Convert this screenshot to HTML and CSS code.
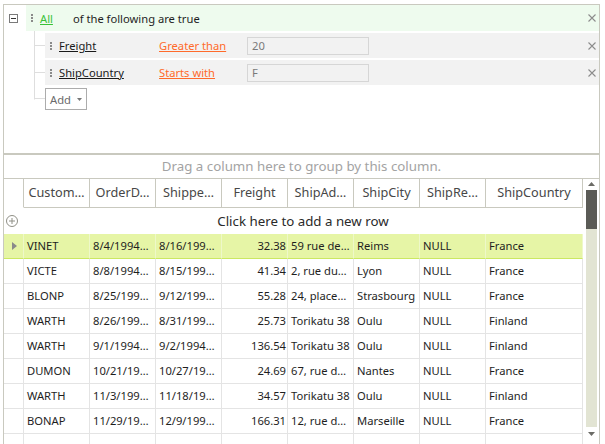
FILE: index.html
```html
<!DOCTYPE html>
<html>
<head>
<meta charset="utf-8">
<link rel="stylesheet" href="styles.css">
</head>
<body>
<div class="app">
  <section class="filter">
    <div class="group-head">
      <span class="toggle"><span class="minus"></span></span>
      <div class="group-bar">
        <svg class="grip" width="2" height="8" viewBox="0 0 2 8"><rect y="0" width="2" height="2"/><rect y="3" width="2" height="2"/><rect y="6" width="2" height="2"/></svg>
        <a class="op-all">All</a>
        <span class="group-text">of the following are true</span>
        <svg class="close" width="8" height="8" viewBox="0 0 8 8"><path d="M0.5 0.5L7.5 7.5M7.5 0.5L0.5 7.5"/></svg>
      </div>
    </div>
    <div class="children">
      <div class="tree-item">
        <span class="link"></span>
        <div class="cond">
          <svg class="grip" width="2" height="8" viewBox="0 0 2 8"><rect y="0" width="2" height="2"/><rect y="3" width="2" height="2"/><rect y="6" width="2" height="2"/></svg>
          <a class="field">Freight</a>
          <a class="oper">Greater than</a>
          <span class="value">20</span>
          <svg class="close" width="8" height="8" viewBox="0 0 8 8"><path d="M0.5 0.5L7.5 7.5M7.5 0.5L0.5 7.5"/></svg>
        </div>
      </div>
      <div class="tree-item">
        <span class="link"></span>
        <div class="cond">
          <svg class="grip" width="2" height="8" viewBox="0 0 2 8"><rect y="0" width="2" height="2"/><rect y="3" width="2" height="2"/><rect y="6" width="2" height="2"/></svg>
          <a class="field">ShipCountry</a>
          <a class="oper">Starts with</a>
          <span class="value">F</span>
          <svg class="close" width="8" height="8" viewBox="0 0 8 8"><path d="M0.5 0.5L7.5 7.5M7.5 0.5L0.5 7.5"/></svg>
        </div>
      </div>
      <div class="tree-item last">
        <span class="link"></span>
        <div class="add-wrap">
          <button class="add">Add <svg width="5" height="3" viewBox="0 0 5 3"><path d="M0 0H5L2.5 3Z"/></svg></button>
        </div>
      </div>
    </div>
  </section>
  <div class="splitter"></div>
  <section class="grid">
    <div class="group-panel">Drag a column here to group by this column.</div>
    <div class="grid-body">
      <div class="grid-main">
        <div class="hrow">
          <div class="hcell ind"></div>
          <div class="hcell">Custom…</div>
          <div class="hcell">OrderD…</div>
          <div class="hcell">Shippe…</div>
          <div class="hcell">Freight</div>
          <div class="hcell">ShipAd…</div>
          <div class="hcell">ShipCity</div>
          <div class="hcell">ShipRe…</div>
          <div class="hcell">ShipCountry</div>
        </div>
        <div class="new-row">
          <svg class="plus" width="12" height="12" viewBox="0 0 12 12"><circle cx="6" cy="6" r="5.5"/><path d="M6 3V9M3 6H9"/></svg>
          <span>Click here to add a new row</span>
        </div>
        <div class="drow selected">
          <div class="cell ind"><svg width="5" height="8" viewBox="0 0 5 8"><path d="M0 0L5 4L0 8Z"/></svg></div>
          <div class="cell">VINET</div><div class="cell">8/4/1994…</div><div class="cell">8/16/199…</div><div class="cell num">32.38</div><div class="cell">59 rue de…</div><div class="cell">Reims</div><div class="cell">NULL</div><div class="cell">France</div>
        </div>
        <div class="drow">
          <div class="cell ind"></div>
          <div class="cell">VICTE</div><div class="cell">8/8/1994…</div><div class="cell">8/15/199…</div><div class="cell num">41.34</div><div class="cell">2, rue du…</div><div class="cell">Lyon</div><div class="cell">NULL</div><div class="cell">France</div>
        </div>
        <div class="drow">
          <div class="cell ind"></div>
          <div class="cell">BLONP</div><div class="cell">8/25/199…</div><div class="cell">9/12/199…</div><div class="cell num">55.28</div><div class="cell">24, place…</div><div class="cell">Strasbourg</div><div class="cell">NULL</div><div class="cell">France</div>
        </div>
        <div class="drow">
          <div class="cell ind"></div>
          <div class="cell">WARTH</div><div class="cell">8/26/199…</div><div class="cell">8/31/199…</div><div class="cell num">25.73</div><div class="cell">Torikatu 38</div><div class="cell">Oulu</div><div class="cell">NULL</div><div class="cell">Finland</div>
        </div>
        <div class="drow">
          <div class="cell ind"></div>
          <div class="cell">WARTH</div><div class="cell">9/1/1994…</div><div class="cell">9/2/1994…</div><div class="cell num">136.54</div><div class="cell">Torikatu 38</div><div class="cell">Oulu</div><div class="cell">NULL</div><div class="cell">Finland</div>
        </div>
        <div class="drow">
          <div class="cell ind"></div>
          <div class="cell">DUMON</div><div class="cell">10/21/19…</div><div class="cell">10/27/19…</div><div class="cell num">24.69</div><div class="cell">67, rue d…</div><div class="cell">Nantes</div><div class="cell">NULL</div><div class="cell">France</div>
        </div>
        <div class="drow">
          <div class="cell ind"></div>
          <div class="cell">WARTH</div><div class="cell">11/3/199…</div><div class="cell">11/18/19…</div><div class="cell num">34.57</div><div class="cell">Torikatu 38</div><div class="cell">Oulu</div><div class="cell">NULL</div><div class="cell">Finland</div>
        </div>
        <div class="drow">
          <div class="cell ind"></div>
          <div class="cell">BONAP</div><div class="cell">11/29/19…</div><div class="cell">12/9/199…</div><div class="cell num">166.31</div><div class="cell">12, rue d…</div><div class="cell">Marseille</div><div class="cell">NULL</div><div class="cell">France</div>
        </div>
        <div class="drow">
          <div class="cell ind"></div>
          <div class="cell"></div><div class="cell"></div><div class="cell"></div><div class="cell num"></div><div class="cell"></div><div class="cell"></div><div class="cell"></div><div class="cell"></div>
        </div>
      </div>
      <div class="vscroll">
        <svg class="arrow" width="7" height="4" viewBox="0 0 7 4"><path d="M0 4L3.5 0L7 4Z"/></svg>
        <div class="track">
          <div class="thumb"></div>
        </div>
        <svg class="arrow" width="7" height="4" viewBox="0 0 7 4"><path d="M0 0H7L3.5 4Z"/></svg>
      </div>
    </div>
  </section>
</div>
</body>
</html>
```

FILE: styles.css
```css
* { box-sizing: border-box; }
html, body { margin: 0; padding: 0; background: #fff; overflow: hidden; }
body {
  font-family: "Segoe UI", "Noto Sans", sans-serif;
  font-size: 11.2px;
  color: #1e1e1e;
  height: 444px;
}
.app {
  margin: 4px 0 0 3px;
  width: 597px;
  height: 440px;
  border: 1px solid #c9c9bf;
  border-bottom: none;
  display: flex;
  flex-direction: column;
}
.filter {
  height: 148px;
  flex: none;
}
.group-head {
  display: flex;
  height: 26px;
}
.toggle {
  width: 22px;
  display: flex;
  justify-content: flex-start;
  align-items: center;
  padding-top: 1px;
  padding-left: 5px;
}
.toggle .minus {
  width: 9px;
  height: 9px;
  border: 1px solid #7a7a7a;
  display: flex;
  align-items: center;
  justify-content: center;
}
.toggle .minus::before {
  content: "";
  width: 5px;
  height: 1px;
  background: #333;
}
.group-bar {
  flex: 1;
  background: #eefbee;
  display: flex;
  align-items: center;
  padding: 0 3px 0 5px;
}
.grip { fill: #8a8a8a; flex: none; }
.op-all {
  color: #38c238;
  text-decoration: underline;
  margin-left: 7px;
}
.group-text {
  margin-left: 20px;
  flex: 1;
}
.close { stroke: #8c8c8c; stroke-width: 1.1; fill: none; flex: none; }
.children {
  margin-left: 30px;
}
.tree-item {
  display: flex;
}
.link {
  width: 11px;
  flex: none;
  background:
    linear-gradient(#dedede, #dedede) no-repeat left top / 1px 100%,
    linear-gradient(#dedede, #dedede) no-repeat right 0 top calc(50% + 1px) / 10px 1px;
}
.tree-item.last .link {
  background:
    linear-gradient(#dedede, #dedede) no-repeat left top / 1px calc(50% + 2px),
    linear-gradient(#dedede, #dedede) no-repeat right 0 top calc(50% + 1px) / 10px 1px;
}
.cond {
  flex: 1;
  margin-top: 2px;
  height: 25px;
  background: #f2f2f2;
  display: flex;
  align-items: center;
  padding: 0 3px 0 5px;
}
.field {
  margin-left: 7px;
  width: 100px;
  color: #1a1a1a;
  text-decoration: underline;
}
.oper {
  width: 88px;
  color: #ff6a2a;
  text-decoration: underline;
}
.value {
  width: 122px;
  height: 18px;
  border: 1px solid #d6d6d6;
  background: #f2f2f2;
  color: #7a7a7a;
  padding-left: 4px;
  line-height: 16px;
}
.cond .close { margin-left: auto; }
.add-wrap {
  margin-top: 3px;
}
.add {
  font: inherit;
  width: 42px;
  height: 22px;
  border: 1px solid #acacac;
  background: #fff;
  color: #6a6a6a;
  padding: 0 0 0 4px;
  display: flex;
  align-items: center;
  gap: 6px;
}
.add svg { fill: #777; }
.splitter {
  height: 2px;
  background: #c9c9bf;
  flex: none;
}
.grid {
  flex: 1;
  display: flex;
  flex-direction: column;
  min-height: 0;
}
.group-panel {
  height: 23px;
  flex: none;
  text-align: center;
  color: #a3a3a3;
  font-size: 13.3px;
  line-height: 22px;
}
.grid-body {
  flex: 1;
  display: flex;
  border-top: 1px solid #c9c9bf;
  min-height: 0;
}
.grid-main {
  width: 579px;
  flex: none;
}
.hrow {
  display: grid;
  grid-template-columns: 20px repeat(7, 66px) 97px;
  height: 29px;
}
.hcell {
  border-right: 1px solid #c9c9bf;
  border-bottom: 1px solid #c9c9bf;
  font-size: 12.7px;
  color: #474747;
  text-align: center;
  line-height: 27px;
  white-space: nowrap;
  overflow: hidden;
  padding: 0 2px;
}
.hcell.ind { border-bottom-color: transparent; }
.new-row {
  height: 26px;
  display: flex;
  align-items: center;
}
.new-row span {
  flex: 1;
  text-align: center;
  font-size: 13.3px;
  color: #2a2a2a;
  padding-left: 5px;
}
.plus {
  margin-left: 2px;
  fill: none;
  stroke: #8f8f86;
  stroke-width: 1;
  flex: none;
}
.drow {
  display: grid;
  grid-template-columns: 20px repeat(7, 66px) 97px;
  height: 25px;
}
.cell {
  border-right: 1px solid #e4e4e4;
  border-bottom: 1px solid #e4e4e4;
  line-height: 24px;
  padding: 0 3px;
  white-space: nowrap;
  overflow: hidden;
}
.cell.num { text-align: right; padding-right: 1px; }
.cell.ind { display: flex; align-items: center; justify-content: center; }
.cell.ind svg { fill: #8a8a8a; margin-left: 2px; }
.drow.selected .cell {
  background: #e6f5a6;
  border-right-color: #eef8c9;
  border-bottom-color: #cbe862;
}
.vscroll {
  flex: 1;
  display: flex;
  flex-direction: column;
  align-items: center;
  padding: 3px 1px 0 2px;
}
.vscroll .arrow { fill: #6b6b66; flex: none; }
.track {
  width: 11px;
  height: 237px;
  margin-top: 4px;
  background: #e2e4d3;
}
.thumb {
  height: 39px;
  background: #5b5b56;
}
.vscroll .arrow:last-child { margin-top: 5px; }
```
